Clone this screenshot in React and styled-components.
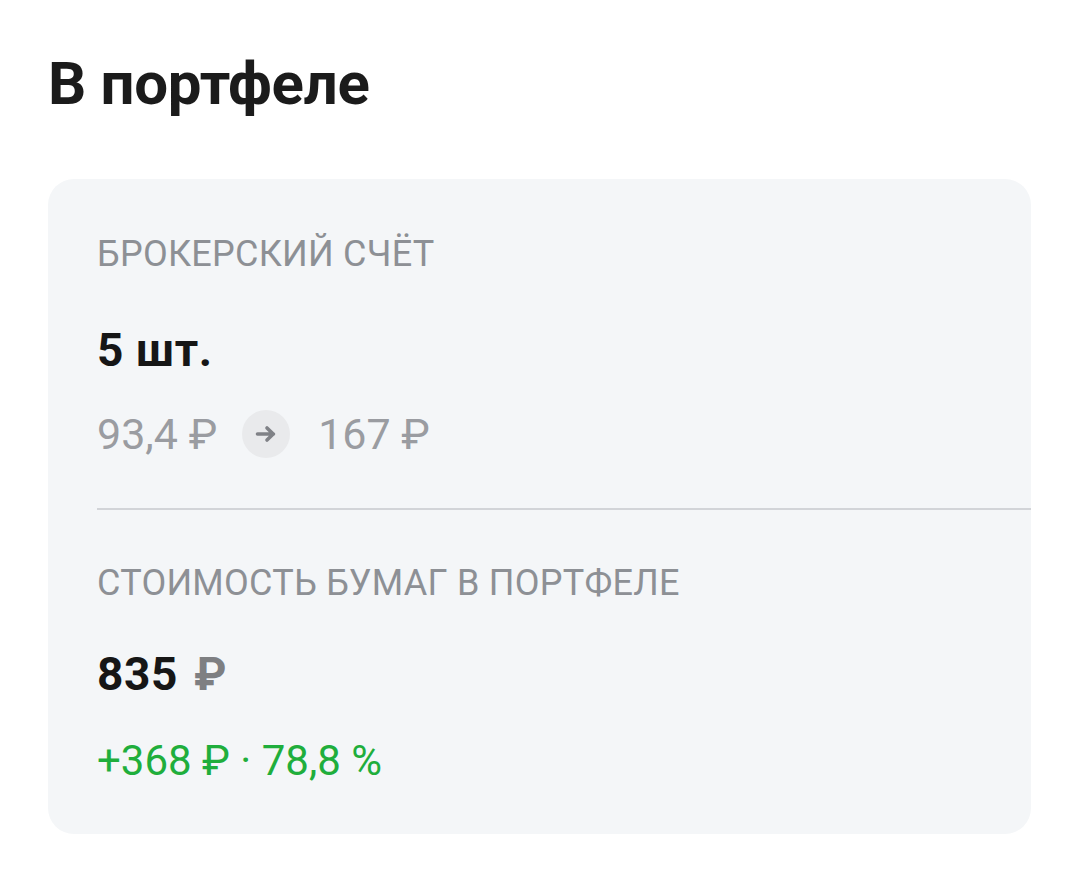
import React from "react";
import styled, { createGlobalStyle } from "styled-components";

const Global = createGlobalStyle`
  html, body { margin: 0; padding: 0; background: #ffffff; }
  body { font-family: Roboto, "Noto Sans", sans-serif; color: #1a1a1a; }
`;

const Page = styled.div`
  width: 1080px;
  padding: 40px 48px 0 48px;
  box-sizing: border-box;
`;

const Title = styled.h1`
  margin: 0 0 51px 0;
  font-size: 60px;
  line-height: 88px;
  font-weight: 700;
  color: #1b1b1b;
  letter-spacing: -0.3px;
`;

const Card = styled.section`
  width: 983px;
  background: #f4f6f8;
  border-radius: 26px;
  padding: 51px 0 45px 49px;
  box-sizing: border-box;
`;

const Section = styled.div`
  padding-right: 49px;
`;

const Label = styled.div`
  font-size: 36px;
  line-height: 48px;
  color: #8d9095;
  font-weight: 400;
  letter-spacing: 0.25px;
  margin-bottom: ${(p) => p.$gap || 40}px;
`;

const Amount = styled.div`
  font-size: 46px;
  line-height: 56px;
  font-weight: 700;
  color: #161616;
  letter-spacing: 0.6px;
  margin-bottom: ${(p) => p.$gap || 26}px;
`;

const Rub = styled.span`
  color: #7e7f82;
  margin-left: 4px;
`;

const PriceRow = styled.div`
  display: flex;
  align-items: center;
  gap: 25px;
  font-size: 43px;
  line-height: 56px;
  color: #9a9ca1;
`;

const ArrowBadge = styled.span`
  width: 48px;
  height: 48px;
  border-radius: 50%;
  background: #e9eaec;
  display: inline-flex;
  align-items: center;
  justify-content: center;
  margin-right: 3px;
`;

const Divider = styled.hr`
  border: none;
  height: 2px;
  background: #d2d4d8;
  margin: 46px 0 49px 0;
`;

const Change = styled.div`
  font-size: 42px;
  line-height: 56px;
  color: #1fae3c;
`;

export default function App() {
  return (
    <>
      <Global />
      <Page>
        <Title>В портфеле</Title>
        <Card>
          <Section>
            <Label $gap={44}>БРОКЕРСКИЙ СЧЁТ</Label>
            <Amount $gap={28}>5 шт.</Amount>
            <PriceRow>
              <span>93,4 ₽</span>
              <ArrowBadge>
                <svg width="22" height="18" viewBox="0 0 22 18" fill="none">
                  <path d="M2.5 9h16M12 3l6.2 6L12 15" stroke="#808287" strokeWidth="3.6" strokeLinecap="round" strokeLinejoin="round" />
                </svg>
              </ArrowBadge>
              <span>167 ₽</span>
            </PriceRow>
          </Section>
          <Divider />
          <Section>
            <Label $gap={39}>СТОИМОСТЬ БУМАГ В ПОРТФЕЛЕ</Label>
            <Amount $gap={31}>
              835 <Rub>₽</Rub>
            </Amount>
            <Change>+368 ₽ · 78,8 %</Change>
          </Section>
        </Card>
      </Page>
    </>
  );
}
